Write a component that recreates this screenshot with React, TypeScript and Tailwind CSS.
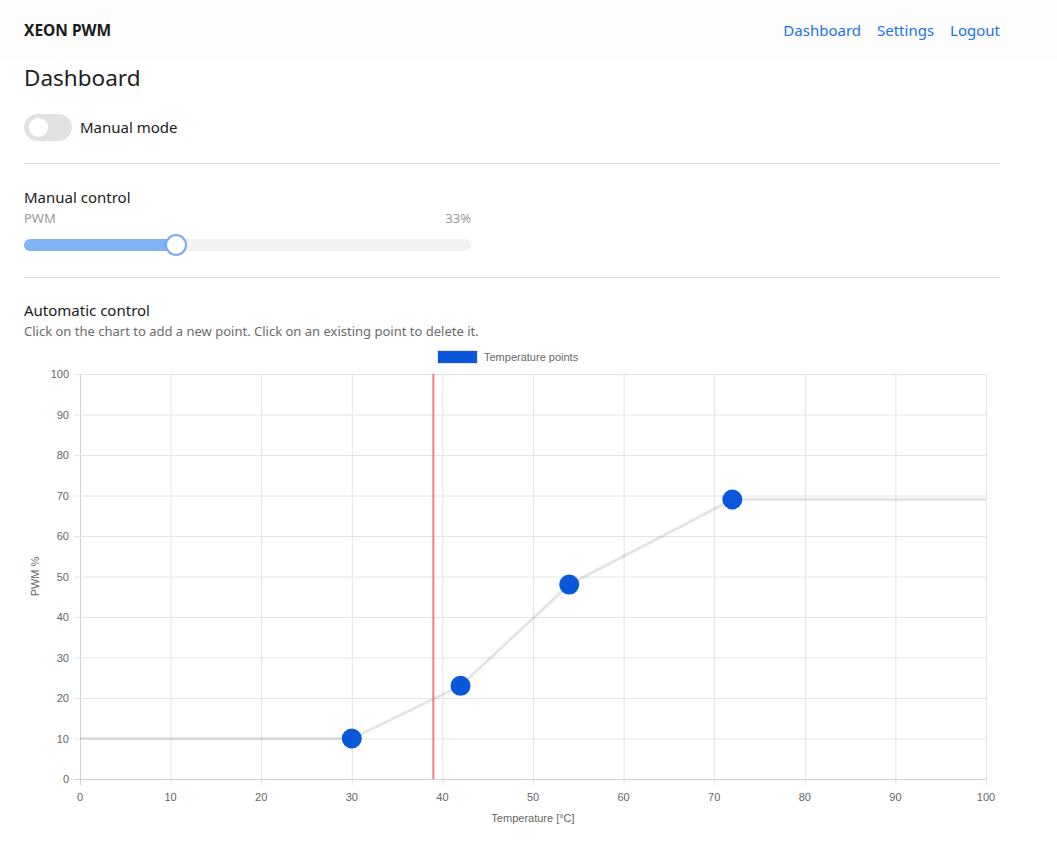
import React, { useState } from "react";

type Pt = { t: number; p: number };

const X0 = 80;
const X1 = 986;
const Y0 = 779;
const Y1 = 374;
const sx = (t: number) => X0 + ((X1 - X0) * t) / 100;
const sy = (p: number) => Y0 - ((Y0 - Y1) * p) / 100;

const points: Pt[] = [
  { t: 30, p: 10 },
  { t: 42, p: 23 },
  { t: 54, p: 48 },
  { t: 72, p: 69 },
];

const ticks = [0, 10, 20, 30, 40, 50, 60, 70, 80, 90, 100];

const Chart = ({ current }: { current: number }) => {
  const line = [
    { t: 0, p: points[0].p },
    ...points,
    { t: 100, p: points[points.length - 1].p },
  ]
    .map((q) => `${sx(q.t)},${sy(q.p)}`)
    .join(" ");
  return (
    <svg width={976} height={490} viewBox="24 345 976 490" className="block" style={{ fontFamily: "'Liberation Sans', Arial, sans-serif" }}>
      {/* legend */}
      <rect x={437.5} y={350.5} width={40} height={13} fill="#0b57d9" stroke="#e3e3e3" strokeWidth={1} />
      <text x={484} y={361} fontSize={11} fill="#666">
        Temperature points
      </text>
      {/* grid */}
      {ticks.map((v) => (
        <g key={"g" + v}>
          <line x1={sx(v) + 0.5} x2={sx(v) + 0.5} y1={Y1} y2={Y0 + 6} stroke={v === 0 ? "#cfcfcf" : "#e4e4e4"} />
          <line x1={X0 - 6} x2={X1} y1={sy(v) + 0.5} y2={sy(v) + 0.5} stroke={v === 0 ? "#cfcfcf" : "#e4e4e4"} />
          <text x={69} y={sy(v) + 4} fontSize={11} fill="#666" textAnchor="end">
            {v}
          </text>
          <text x={sx(v)} y={801} fontSize={11} fill="#666" textAnchor="middle">
            {v}
          </text>
        </g>
      ))}
      <text x={533} y={822} fontSize={11} fill="#666" textAnchor="middle">
        Temperature [°C]
      </text>
      <text x={0} y={0} fontSize={11} fill="#666" textAnchor="middle" transform={`translate(39 ${576.5}) rotate(-90)`}>
        PWM %
      </text>
      {/* curve */}
      <polyline points={line} fill="none" stroke="rgba(0,0,0,0.1)" strokeWidth={3} />
      {/* current temperature */}
      <line x1={sx(current)} x2={sx(current)} y1={Y1} y2={Y0} stroke="#f47c7c" strokeWidth={2} />
      {points.map((q) => (
        <circle key={q.t} cx={sx(q.t)} cy={sy(q.p)} r={10} fill="#0b57d9" />
      ))}
    </svg>
  );
};

export default function App() {
  const [manual, setManual] = useState(false);
  const [pwm, setPwm] = useState(33);

  return (
    <div className="min-h-screen bg-white text-[#212121]" style={{ fontFamily: "'Noto Sans', sans-serif" }}>
      <header className="h-[61px] bg-[#fdfdfd]">
        <div className="w-[1024px] h-full flex items-center justify-between px-6">
          <span className="font-bold text-[15.5px] text-[#1a1a1a]">XEON PWM</span>
          <nav className="flex gap-4 text-[15px] text-[#1a73e8]">
            <a href="#">Dashboard</a>
            <a href="#">Settings</a>
            <a href="#">Logout</a>
          </nav>
        </div>
      </header>
      <main className="px-6 w-[1024px]">
        <h1 className="text-[22.5px] leading-[34px]">Dashboard</h1>
        <div className="flex items-center gap-2 mt-[19px]">
          <button
            onClick={() => setManual(!manual)}
            className="w-12 h-[27px] rounded-full bg-[#e2e2e2] relative"
          >
            <span className="absolute left-[5px] top-[4px] w-[19px] h-[19px] rounded-full bg-white" />
          </button>
          <span className="text-[15px]">Manual mode</span>
        </div>
        <div className="border-t border-[#dcdcdc] mt-[22px]" />
        <div className="pt-[23px]">
          <div className="text-[15px] leading-5">Manual control</div>
          <div className="w-[447px] flex justify-between text-[13px] text-[#9a9a9a] mt-[2px]">
            <span>PWM</span>
            <span>{pwm}%</span>
          </div>
          <div className="w-[447px] h-3 rounded-full bg-[#f2f2f2] relative mt-[10px]" onClick={() => setPwm(pwm)}>
            <div className="h-3 rounded-full bg-[#82b1f4] w-[152px]" />
            <div className="absolute left-[141px] top-[-5px] w-[22px] h-[22px] rounded-full bg-white border-2 border-[#7aa9f0]" />
          </div>
        </div>
        <div className="border-t border-[#dcdcdc] mt-[26px]" />
        <div className="pt-[22px]">
          <div className="text-[15px] leading-5">Automatic control</div>
          <div className="text-[13px] text-[#6b6b6b] mt-[2px]">
            Click on the chart to add a new point. Click on an existing point to delete it.
          </div>
          <div className="mt-[4px]">
            <Chart current={39} />
          </div>
        </div>
      </main>
    </div>
  );
}
